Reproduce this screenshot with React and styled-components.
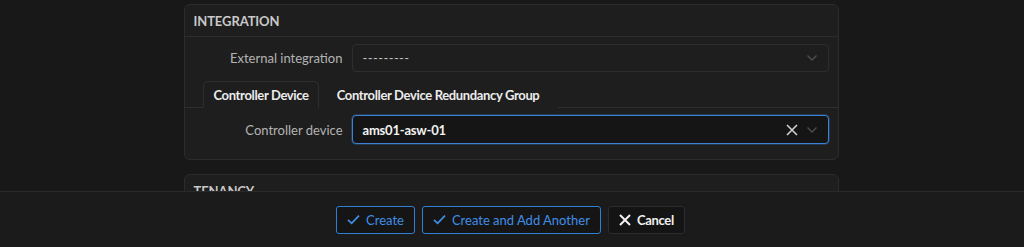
import React from "react";
import styled, { createGlobalStyle } from "styled-components";

const GlobalStyle = createGlobalStyle`
  html, body {
    margin: 0;
    padding: 0;
    background: #181818;
  }
  body {
    font-family: Lato, "Noto Sans", sans-serif;
    color: #d6d6d6;
  }
  * { box-sizing: border-box; }
`;

const Page = styled.div`
  height: 100vh;
  display: flex;
  flex-direction: column;
  overflow: hidden;
`;

const Scroller = styled.main`
  flex: 1;
  overflow: hidden;
  padding: 4px 2px 0 0;
`;

const Column = styled.div`
  width: 655px;
  margin: 0 auto;
  display: flex;
  flex-direction: column;
  gap: 14px;
`;

const Card = styled.section`
  background: #1e1e1e;
  border: 1px solid #2c2c2c;
  border-radius: 6px;
`;

const CardHeader = styled.h3`
  margin: 0;
  height: 32px;
  padding: 0 9px;
  display: flex;
  align-items: center;
  border-bottom: 1px solid #2c2c2c;
  font-size: 13px;
  font-weight: 700;
  letter-spacing: -0.1px;
  color: #c9c9c9;
  text-transform: uppercase;
`;

const CardBody = styled.div`
  padding: 7px 0 15px;
`;

const FieldRow = styled.div`
  display: grid;
  grid-template-columns: 158px 1fr;
  column-gap: 9px;
  align-items: center;
  padding-right: 9px;
`;

const Label = styled.label`
  text-align: right;
  font-size: 13px;
  color: #b4b4b4;
`;

const Select = styled.div`
  height: ${(p) => (p.$focused ? "29px" : "28px")};
  display: flex;
  align-items: center;
  padding: 0 10px;
  border-radius: 4px;
  border: 1px solid ${(p) => (p.$focused ? "#3b82d6" : "#2e2e2e")};
  background: ${(p) => (p.$focused ? "#151515" : "#1e1e1e")};
  box-shadow: ${(p) => (p.$focused ? "0 0 0 1px rgba(59,130,214,0.25)" : "none")};
`;

const SelectValue = styled.span`
  flex: 1;
  font-size: 13px;
  font-weight: ${(p) => (p.$strong ? 700 : 400)};
  letter-spacing: ${(p) => (p.$strong ? "-0.2px" : "0.4px")};
  color: ${(p) => (p.$strong ? "#f2f2f2" : "#bdbdbd")};
`;

const Indicators = styled.span`
  display: flex;
  align-items: center;
  gap: 8px;
  color: #4e4e4e;
`;

const Tabs = styled.ul`
  list-style: none;
  margin: 9px 0 7px;
  padding: 0 0 0 18px;
  display: flex;
  border-bottom: 1px solid #2e2e2e;
`;

const Tab = styled.li`
  height: 27px;
  margin-bottom: -1px;
  padding: 0 ${(p) => (p.$active ? "9px" : "18px")} 0 ${(p) => (p.$active ? "10px" : "17px")};
  display: flex;
  align-items: center;
  font-size: 13px;
  font-weight: 700;
  letter-spacing: -0.35px;
  color: #ececec;
  border: 1px solid ${(p) => (p.$active ? "#2e2e2e" : "transparent")};
  border-bottom-color: ${(p) => (p.$active ? "#1e1e1e" : "transparent")};
  border-radius: 5px 5px 0 0;
  background: #1e1e1e;
`;

const Footer = styled.footer`
  height: 56px;
  flex-shrink: 0;
  background: #1b1b1b;
  border-top: 1px solid #2a2a2a;
  display: flex;
  align-items: center;
  justify-content: center;
  gap: 7px;
  padding-right: 3px;
`;

const Button = styled.button`
  height: 28px;
  display: flex;
  align-items: center;
  gap: 6px;
  padding: 0 10px;
  border-radius: 3px;
  font-family: inherit;
  font-size: 13px;
  font-weight: ${(p) => (p.$primary ? 400 : 700)};
  letter-spacing: ${(p) => (p.$primary ? "0" : "-0.3px")};
  color: ${(p) => (p.$primary ? "#3f8fe6" : "#f0f0f0")};
  background: ${(p) => (p.$primary ? "#161516" : "#141414")};
  border: 1px solid ${(p) => (p.$primary ? "#2f7fd6" : "#2c2c2c")};
`;

const Chevron = () => (
  <svg width="12" height="8" viewBox="0 0 12 8" fill="none">
    <path d="M1.5 1.5L6 6L10.5 1.5" stroke="currentColor" strokeWidth="1.4" />
  </svg>
);

const Cross = ({ size = 12, color = "#cfcfcf", width = 1.6 }) => (
  <svg width={size} height={size} viewBox="0 0 12 12" fill="none">
    <path d="M1 1L11 11M11 1L1 11" stroke={color} strokeWidth={width} />
  </svg>
);

const Check = () => (
  <svg width="13" height="11" viewBox="0 0 13 11" fill="none">
    <path d="M1 5.8L4.6 9.3L12 1.6" stroke="currentColor" strokeWidth="1.7" />
  </svg>
);

const App = () => {
  return (
    <>
      <GlobalStyle />
      <Page>
        <Scroller>
          <Column>
            <Card>
              <CardHeader>Integration</CardHeader>
              <CardBody>
                <FieldRow>
                  <Label>External integration</Label>
                  <Select>
                    <SelectValue>---------</SelectValue>
                    <Indicators>
                      <Chevron />
                    </Indicators>
                  </Select>
                </FieldRow>
                <Tabs>
                  <Tab $active>Controller Device</Tab>
                  <Tab>Controller Device Redundancy Group</Tab>
                </Tabs>
                <FieldRow>
                  <Label>Controller device</Label>
                  <Select $focused>
                    <SelectValue $strong>ams01-asw-01</SelectValue>
                    <Indicators>
                      <Cross />
                      <Chevron />
                    </Indicators>
                  </Select>
                </FieldRow>
              </CardBody>
            </Card>
            <Card>
              <CardHeader>Tenancy</CardHeader>
            </Card>
          </Column>
        </Scroller>
        <Footer>
          <Button $primary>
            <Check />
            Create
          </Button>
          <Button $primary>
            <Check />
            Create and Add Another
          </Button>
          <Button>
            <Cross size={12} color="#f0f0f0" width={2} />
            Cancel
          </Button>
        </Footer>
      </Page>
    </>
  );
};

export default App;
